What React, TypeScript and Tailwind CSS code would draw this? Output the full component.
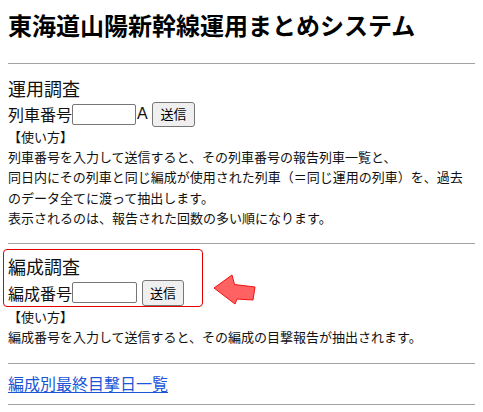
const jp = { fontFamily: '"Noto Sans CJK JP", "Noto Sans", sans-serif' }

function SendButton({ className }: { className: string }) {
  return (
    <button
      type="button"
      className={`flex items-center justify-center rounded-[3px] border border-[#767676] bg-[#efefef] text-[13px] text-black ${className}`}
    >
      送信
    </button>
  )
}

function Arrow() {
  return (
    <svg width="48" height="35" viewBox="0 0 48 35" className="ml-[7px] mt-[23px] shrink-0">
      <polygon
        points="4,16 22,3 24.5,12.5 45,15 43,28 27,27 25,32"
        fill="#ff6262"
        stroke="#f01010"
        strokeWidth="1"
        strokeLinejoin="round"
      />
    </svg>
  )
}

export default function App() {
  return (
    <div className="min-h-[412px] bg-white px-2 text-[#111]" style={jp}>
      <h1 className="pt-[12px] text-[24px] font-bold leading-[26px] text-black">
        東海道山陽新幹線運用まとめシステム
      </h1>
      <hr className="mt-[25px] border-t border-[#a3a3a3]" />

      <div className="mt-[12px] text-[18px] leading-[24px]">運用調査</div>
      <div className="mt-[1px] flex h-[26px] items-center text-[16px]">
        <span>列車番号</span>
        <input type="text" className="h-[21px] w-[64px] rounded-[2px] border border-[#767676] bg-white" />
        <span className="ml-[1px] w-[11px]" style={{ fontFamily: '"Liberation Sans", sans-serif' }}>A</span>
        <SendButton className="ml-[4px] h-[25px] w-[43px]" />
      </div>
      <div className="text-[13px] leading-[20px]">【使い方】</div>
      <div className="text-[13px] leading-[20.4px]">
        <p>列車番号を入力して送信すると、その列車番号の報告列車一覧と、</p>
        <p>同日内にその列車と同じ編成が使用された列車（＝同じ運用の列車）を、過去</p>
        <p>のデータ全てに渡って抽出します。</p>
        <p>表示されるのは、報告された回数の多い順になります。</p>
      </div>
      <hr className="mt-[14px] border-t border-[#a3a3a3]" />

      <div className="mt-[5px] flex items-start">
        <div className="-ml-[5px] h-[58px] w-[200px] rounded-[4px] border border-[#e00000] pl-[4px]">
          <div className="mt-[4px] text-[18px] leading-[24px]">編成調査</div>
          <div className="mt-[2px] flex h-[26px] items-center text-[16px]">
            <span>編成番号</span>
            <input type="text" className="h-[21px] w-[65px] rounded-[2px] border border-[#767676] bg-white" />
            <SendButton className="ml-[5px] h-[26px] w-[42px]" />
          </div>
        </div>
        <Arrow />
      </div>
      <div className="text-[13px] leading-[20px]">【使い方】</div>
      <p className="text-[13px] leading-[20px]">編成番号を入力して送信すると、その編成の目撃報告が抽出されます。</p>
      <hr className="mt-[16px] border-t border-[#a3a3a3]" />

      <a href="#" className="mt-[9px] block w-fit text-[16px] leading-[20px] text-[#1a56d6] underline underline-offset-2">
        編成別最終目撃日一覧
      </a>
      <hr className="mt-[11px] border-t border-[#a3a3a3]" />
    </div>
  )
}
